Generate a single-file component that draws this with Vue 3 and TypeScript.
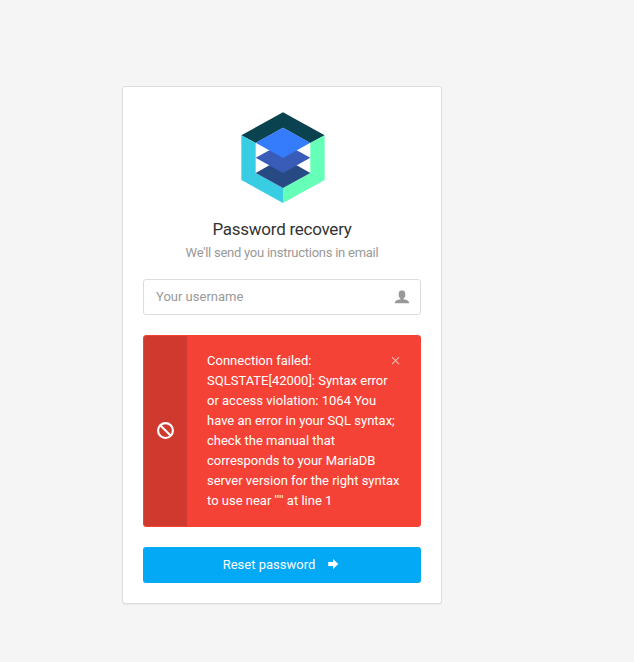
<script setup lang="ts">
import { ref } from 'vue'

const username = ref<string>('')
const showError = ref<boolean>(true)
const errorMessage: string =
  'Connection failed: SQLSTATE[42000]: Syntax error or access violation: 1064 You have an error in your SQL syntax; check the manual that corresponds to your MariaDB server version for the right syntax to use near '
const errorToken: string = "''''"
const errorLine: number = 1
</script>

<template>
  <main class="page">
    <form class="panel" @submit.prevent>
      <header class="intro">
        <svg class="logo" viewBox="33 21 252 274" aria-hidden="true">
          <polygon fill="#0a424f" points="34,91 159,22 284,91 241,114 159,68 77,114" />
          <polygon fill="#38cde2" points="34,91 77,114 77,204 159,249 159,294 34,225" />
          <polygon fill="#65ffb8" points="284,91 241,114 241,204 159,249 159,294 284,225" />
          <polygon fill="#284a84" points="77,204 118,181 200,181 241,204 159,249" />
          <polygon fill="#385cb8" points="77,158 118,136 200,136 241,158 159,204" />
          <polygon fill="#347cfc" points="77,113 159,68 241,113 159,159" />
        </svg>
        <h5 class="title">Password recovery</h5>
        <small class="subtitle">We'll send you instructions in email</small>
      </header>

      <div class="field">
        <input v-model="username" type="text" placeholder="Your username" />
        <svg class="user" viewBox="0 0 16 16" aria-hidden="true">
          <path d="M9.500 10.300v-.7c.9-.5 1.800-1.800 1.800-3.100 0-2.900 0-5.100-3.300-5.100s-3.300 2.200-3.300 5.100c0 1.300.9 2.600 1.800 3.100v.7C3.300 10.600.8 12 .8 14.200h14.400c0-2.200-2.500-3.600-5.700-3.900z" />
        </svg>
      </div>

      <div v-if="showError" class="alert">
        <div class="alert-side">
          <svg class="blocked" viewBox="0 0 16 16" aria-hidden="true">
            <circle cx="8" cy="8" r="7" />
            <path d="M3 3l10 10" />
          </svg>
        </div>
        <div class="alert-body">
          <p>{{ errorMessage }}<span class="token">{{ errorToken }}</span> at line {{ errorLine }}</p>
          <button class="close" type="button" aria-label="Close" @click="showError = false">
            <svg viewBox="0 0 8 8"><path d="M1 .2l7 7M8 .2l-7 7" /></svg>
          </button>
        </div>
      </div>

      <button class="submit" type="submit">
        <span>Reset password</span>
        <svg viewBox="0 0 10 10" aria-hidden="true">
          <path d="M.2 3H5V0l5.300 5L5 10V7H.2z" />
        </svg>
      </button>
    </form>
  </main>
</template>

<style>
body {
  background: #f5f5f5;
}
</style>

<style scoped>
.page {
  box-sizing: border-box;
  padding: 86px 192px 58px 122px;
  font: 13px/20px Roboto, sans-serif;
  color: #333;
}
.panel {
  box-sizing: border-box;
  width: 320px;
  height: 518px;
  padding: 20px;
  display: flex;
  flex-direction: column;
  background: #fff;
  border: 1px solid #ddd;
  border-radius: 3px;
  box-shadow: 0 1px 1px rgba(0, 0, 0, 0.05);
}
.intro {
  display: flex;
  flex-direction: column;
  align-items: center;
  padding-top: 5px;
  letter-spacing: -0.255px;
}
.logo {
  width: 84px;
  height: 91.300px;
  margin-left: 2px;
}
.title {
  margin: 14px 0 0;
  font-size: 17px;
  line-height: 24px;
  font-weight: 400;
}
.subtitle {
  margin-top: 2px;
  font-size: 13px;
  line-height: 20px;
  color: #999;
}
.field {
  box-sizing: border-box;
  height: 36px;
  margin-top: 16px;
  padding: 0 10px 0 12px;
  display: flex;
  align-items: center;
  border: 1px solid #ddd;
  border-radius: 3px;
}
.field input {
  flex: 1;
  min-width: 0;
  padding: 0;
  border: 0;
  outline: 0;
  background: none;
  font: inherit;
  color: #333;
}
.field input::placeholder {
  color: #999;
  opacity: 1;
}
.user {
  width: 16px;
  height: 16px;
  fill: #999;
}
.alert {
  display: flex;
  height: 192px;
  margin-top: 20px;
  box-sizing: border-box;
  border: 1px solid #f44336;
  border-radius: 3px;
  background: #f44336;
  color: #fff;
}
.alert-side {
  box-sizing: border-box;
  width: 43px;
  padding: 0 1px 1px 0;
  display: flex;
  align-items: center;
  justify-content: center;
  background: #cf392e;
  border-radius: 2px 0 0 2px;
}
.blocked {
  width: 17px;
  height: 17px;
  fill: none;
  stroke: #fff;
  stroke-width: 2;
}
.alert-body {
  flex: 1;
  display: flex;
  align-items: flex-start;
  padding: 15px 20px;
}
.alert-body p {
  flex: none;
  width: 194px;
  margin: 0;
}
.token {
  font-kerning: none;
}
.close {
  flex: none;
  width: 8px;
  height: 8px;
  margin: 6px 0 0 -10px;
  padding: 0;
  display: flex;
  border: 0;
  background: none;
}
.close svg {
  width: 8px;
  height: 8px;
  overflow: visible;
  fill: none;
  stroke: #fff;
  stroke-width: 1.200;
  stroke-opacity: 0.6;
}
.submit {
  height: 36px;
  margin-top: 20px;
  padding: 0 3px 0 0;
  display: flex;
  align-items: center;
  justify-content: center;
  gap: 13px;
  border: 0;
  border-radius: 3px;
  background: #03a9f4;
  color: #fff;
  font: inherit;
}
.submit svg {
  width: 10px;
  height: 10px;
  margin-bottom: 2px;
  overflow: visible;
  fill: #fff;
}
</style>
